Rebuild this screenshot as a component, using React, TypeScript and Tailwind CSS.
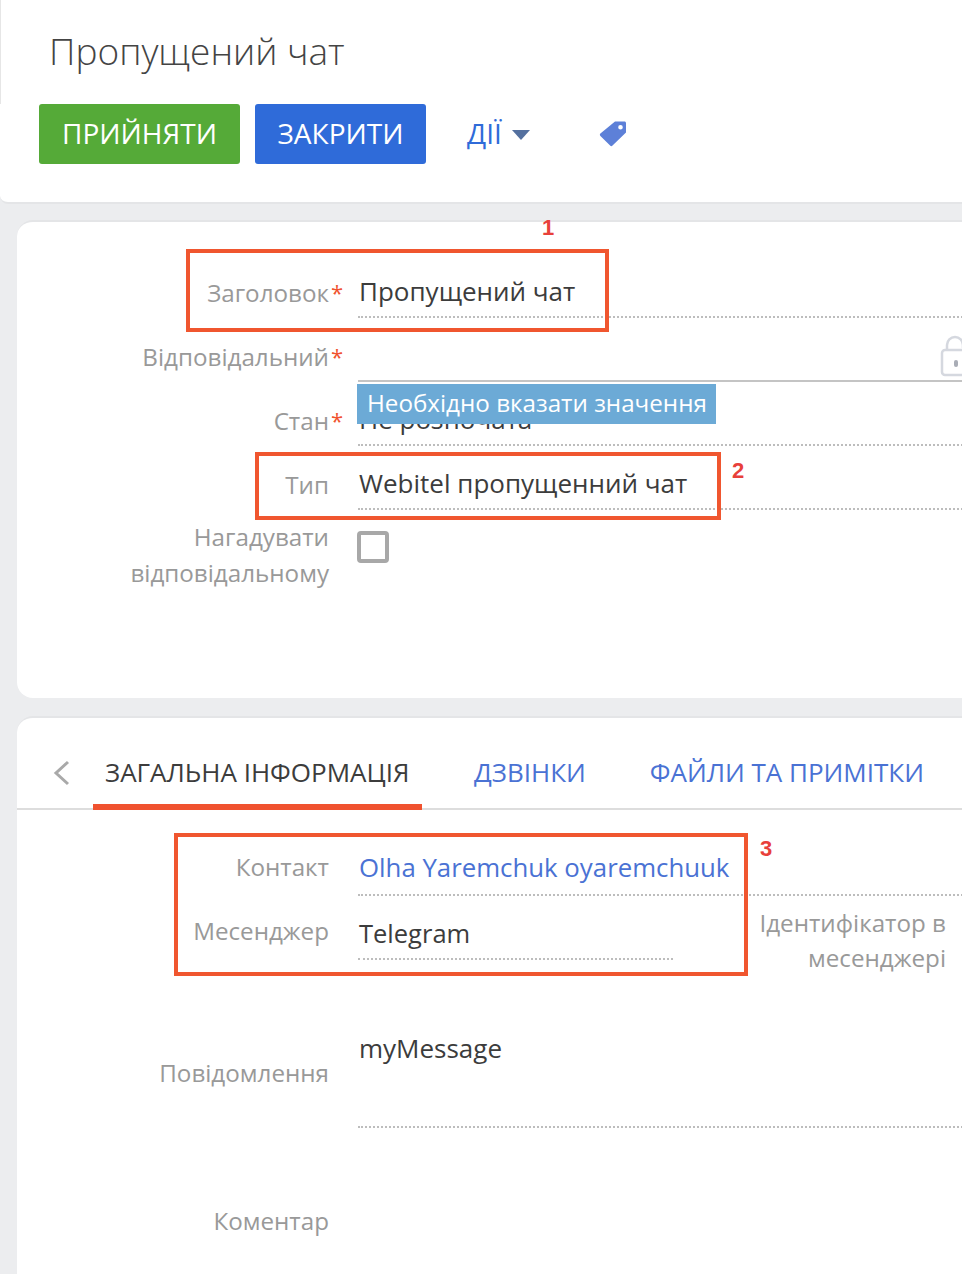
const FONT = "font-['Open_Sans',sans-serif]";

function Label({ children, required }: { children: React.ReactNode; required?: boolean }) {
  return (
    <div className="relative w-[329px] shrink-0 text-right text-[24.2px] leading-[36px] text-[#999999]">
      {children}
      {required && <span className="absolute left-[331px] top-[-1px] text-[22px] text-[#f0522f]">*</span>}
    </div>
  );
}

function Row({
  label,
  value,
  required,
  line = "dotted",
  link,
  labelPad = "pb-[7px]",
  valuePad = "pb-[7px]",
}: {
  label: string;
  value?: string;
  required?: boolean;
  line?: "dotted" | "solid";
  link?: boolean;
  labelPad?: string;
  valuePad?: string;
}) {
  return (
    <div className="flex h-16 items-end">
      <div className={labelPad}>
        <Label required={required}>{label}</Label>
      </div>
      <div className="ml-[29px] h-16 flex-1">
        <div
          className={`flex h-full items-end pl-px leading-[36px] ${valuePad} ${link ? "text-[25.8px] text-[#4a72d4]" : "text-[26px] text-[#3c3c3c]"} ${
            line === "dotted" ? "border-b-2 border-dotted border-[#bdbdbd]" : "border-b-2 border-[#c4c4c4]"
          }`}
        >
          {value}
        </div>
      </div>
    </div>
  );
}

function Annotation({ className, n, numClass }: { className: string; n: string; numClass: string }) {
  return (
    <>
      <div className={`absolute border-4 border-[#f0562f] ${className}`} />
      <div className={`absolute text-[22px] font-bold leading-none text-[#e8403a] font-['Liberation_Sans',sans-serif] ${numClass}`}>{n}</div>
    </>
  );
}

export default function App() {
  return (
    <div className={`relative h-[1274px] w-[962px] overflow-hidden bg-[#ecedef] ${FONT}`}>
      {/* шапка */}
      <header className="h-[204px] rounded-bl-lg border-b-2 border-[#e4e5e7] bg-white">
        <div className="h-[104px] border-l border-[#e6e6e6] pl-[48px] pt-[25px]">
          <h1 className="text-[37px] font-light leading-[52px] text-[#444444]">Пропущений чат</h1>
        </div>
        <div className="flex items-center pl-[39px]">
          <button className="h-[60px] w-[201px] rounded-[3px] bg-[#55aa38] pb-[2px] text-[28px] text-white">ПРИЙНЯТИ</button>
          <button className="ml-[15px] h-[60px] w-[171px] rounded-[3px] bg-[#2f6bd9] pb-[2px] text-[28px] text-white">ЗАКРИТИ</button>
          <span className="ml-[41px] pb-[2px] text-[28px] text-[#2f6bd9]">ДІЇ</span>
          <svg className="ml-[10px] mt-[2px]" width="18" height="10" viewBox="0 0 18 10">
            <path d="M0 0h18L9 10z" fill="#54709f" />
          </svg>
          <svg className="mb-[2px] ml-[69px]" width="28" height="28" viewBox="0 0 28 28">
            <path
              fillRule="evenodd"
              d="M16 2.5h9.5c.8 0 1.5.7 1.500 1.500v9.500L13.500 26.600c-.7.7-1.700.7-2.400 0L1.400 16.900c-.7-.7-.7-1.700 0-2.400zM21.500 6a2.300 2.300 0 1 0 0 4.600 2.300 2.300 0 0 0 0-4.600z"
              fill="#5d80d8"
            />
          </svg>
        </div>
      </header>

      {/* основна картка */}
      <section className="relative -mr-10 ml-[17px] mt-4 h-[478px] rounded-l-2xl border-t-2 border-[#e4e5e7] bg-white pt-8">
        <div className="-ml-[17px]">
          <Row label="Заголовок" value="Пропущений чат" required />
          <Row label="Відповідальний" required line="solid" />
          <Row label="Стан" value="Не розпочата" required />
          <Row label="Тип" value="Webitel пропущенний чат" />
          <div className="flex pt-[9px]">
            <div className="w-[329px] text-right text-[24.2px] leading-[36px] text-[#999999]">
              Нагадувати
              <br />
              відповідальному
            </div>
            <div className="ml-[28px] mt-3 h-8 w-8 rounded-[4px] border-4 border-[#a8a8a8]" />
          </div>
        </div>
      </section>

      {/* вкладки */}
      <section className="-mr-10 ml-[17px] mt-[18px] h-[600px] rounded-l-2xl border-t-2 border-[#e4e5e7] bg-white">
        <div className="flex h-[92px] items-end border-b-2 border-[#dddddd] text-[26px]">
          <svg className="mb-[22px] ml-[36px]" width="18" height="26" viewBox="0 0 18 26" fill="none">
            <path d="M15 2L3 13l12 11" stroke="#a9a9a9" strokeWidth="3" />
          </svg>
          <div className="relative -mb-[2px] ml-[22px] h-[56px] w-[329px] border-b-[6px] border-[#f0522f] pl-3 leading-[36px] text-[#3c3c3c]">
            ЗАГАЛЬНА ІНФОРМАЦІЯ
          </div>
          <div className="mb-[18px] ml-[52px] leading-[36px] text-[#4a72d4]">ДЗВІНКИ</div>
          <div className="mb-[18px] ml-[64px] whitespace-nowrap leading-[36px] text-[#4a72d4]">ФАЙЛИ ТА ПРИМІТКИ</div>
        </div>
        <div className="-ml-[17px] pt-[22px]">
          <Row label="Контакт" value="Olha Yaremchuk oyaremchuuk" link labelPad="pb-[11px]" valuePad="pb-[9px]" />
          <div className="flex">
            <div className="flex-none">
              <div className="flex h-16 items-end">
                <div className="pb-[11px]">
                  <Label>Месенджер</Label>
                </div>
                <div className="ml-[29px] flex h-16 w-[315px] items-end border-b-2 border-dotted border-[#bdbdbd] pb-[7px] pl-px text-[25.5px] leading-[36px] text-[#3c3c3c]">
                  Telegram
                </div>
              </div>
            </div>
            <div className="ml-[81px] w-[192px] pt-[9px] text-right text-[24.2px] leading-[35px] text-[#999999]">
              Ідентифікатор в месенджері
            </div>
          </div>
          <div className="mt-[55px] flex">
            <div className="pt-[25px]">
              <Label>Повідомлення</Label>
            </div>
            <div className="ml-[29px] h-[98px] flex-1 border-b-2 border-dotted border-[#bdbdbd] pl-px text-[26px] leading-[36px] text-[#3c3c3c]">
              myMessage
            </div>
          </div>
          <div className="mt-[75px]">
            <Label>Коментар</Label>
          </div>
        </div>
      </section>

      {/* підказка поверх поля */}
      <div className="absolute left-[357px] top-[384px] flex h-10 w-[359px] items-center whitespace-nowrap bg-[#6caad6] pb-[2px] pl-[10px] text-[24.2px] text-white">
        Необхідно вказати значення
      </div>
      <svg className="absolute left-[938px] top-[335px]" width="24" height="42" viewBox="0 0 24 42" fill="none">
        <path d="M9 15V10a8 8 0 0 1 16 0v3" stroke="#d5d8df" strokeWidth="2.500" />
        <rect x="4" y="15" width="30" height="25" rx="3" stroke="#d5d8df" strokeWidth="2.500" />
        <rect x="16" y="25" width="4" height="7" rx="2" fill="#a9adb6" />
      </svg>

      {/* позначки поверх скриншота */}
      <Annotation className="left-[186px] top-[249px] h-[83px] w-[423px]" n="1" numClass="left-[542px] top-[217px]" />
      <Annotation className="left-[255px] top-[452px] h-[68px] w-[466px]" n="2" numClass="left-[732px] top-[460px]" />
      <Annotation className="left-[174px] top-[833px] h-[143px] w-[574px]" n="3" numClass="left-[760px] top-[838px]" />
    </div>
  );
}
